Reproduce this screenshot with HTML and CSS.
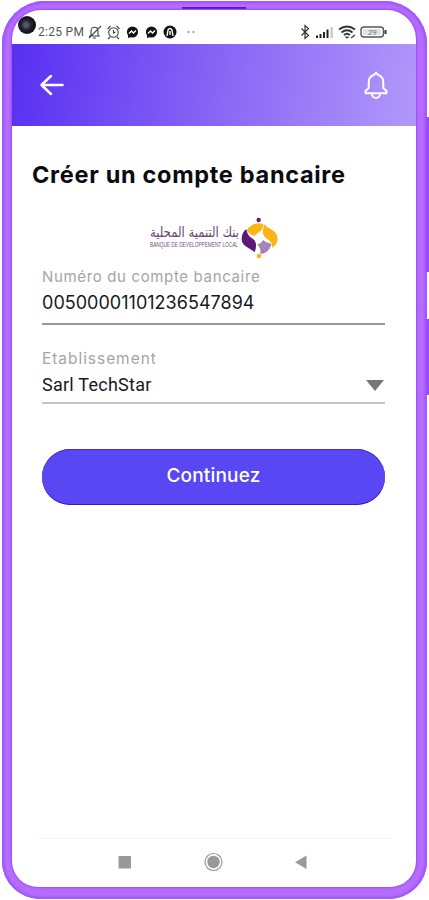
FILE: index.html
```html
<!DOCTYPE html>
<html lang="fr">
<head>
<meta charset="utf-8">
<meta name="viewport" content="width=device-width, initial-scale=1">
<title>Créer un compte bancaire</title>
<link rel="stylesheet" href="styles.css">
</head>
<body>
<div class="phone">
  <span class="speaker"></span>
  <span class="side-key volume"></span>
  <span class="side-key power"></span>
  <div class="screen">
    <span class="camera"></span>
    <div class="status">
      <span class="time">2:25 PM</span>
      <svg class="status-left" width="108" height="16" viewBox="0 0 108 16" fill="none" stroke="#444" stroke-width="1.1">
        <path d="M2 12h11M4 12V7c0-5 7-5 7 0v5M6 14h3M2 14 14 2"/>
        <circle cx="26.500" cy="8.500" r="4.800"/><path d="M26.500 6v3l2-1M20.500 5l3-3M32.500 5l-3-3M23 13l-2 2M30 13l2 2"/>
        <g stroke="none" fill="#111"><circle cx="45.500" cy="8" r="5.600"/><path d="m41 11 0 3 3-1z"/><circle cx="64.500" cy="8" r="5.600"/><path d="m60 11 0 3 3-1z"/><circle cx="83" cy="8" r="6.500"/></g>
        <path stroke="#fff" stroke-width="1.400" d="m42 9.500 2.500-2.500 2 2 2.500-2.500M61 9.500l2.500-2.500 2 2 2.500-2.500M80 12l1-6q2-3 4 0l1 6M83 7v4"/>
        <g stroke="none" fill="#aaa"><circle cx="101.500" cy="8" r="1.200"/><circle cx="106.500" cy="8" r="1.200"/></g>
      </svg>
      <svg class="status-right" width="88" height="16" viewBox="0 0 88 16" fill="none" stroke="#333" stroke-width="1.200">
        <path d="m1.500 4.500 7 7-3.500 3v-13l3.500 3-7 7"/>
        <g stroke="none" fill="#222"><rect x="16" y="11.500" width="2" height="2.500"/><rect x="19.500" y="10" width="2" height="4"/><rect x="23" y="8" width="2" height="6"/><rect x="26.500" y="5.500" width="2" height="8.500"/><rect x="30.500" y="3" width="2.500" height="11" fill="#ccc"/></g>
        <path stroke-width="1.900" d="M39 5.500q8-6 16 0M41.500 8.500q5.500-4.500 11 0M44 11q3-2.500 6 0"/><path d="m45.500 12.500 1.500 1.500 1.500-1.500M51 14l4-3"/>
        <rect x="61" y="3" width="22.500" height="10" rx="3" stroke="#555" stroke-width="1.400"/><path stroke-width="2" d="M85.500 6v4"/>
        <rect x="63" y="5" width="18" height="6" rx="1" fill="#e2e2e2" stroke="none"/>
        <text x="68" y="11" class="battery">29</text>
      </svg>
    </div>
    <header class="header">
      <svg width="26" height="22" viewBox="0 0 26 22" fill="none" stroke="#fff" stroke-width="2.500" stroke-linecap="round" stroke-linejoin="round"><path d="M23.500 11H2.500M12 2 2.500 11l9.500 9"/></svg>
      <svg width="24" height="29" viewBox="0 0 24 29" fill="none" stroke="#fff" stroke-width="2" stroke-linejoin="round"><path d="M12 1.500 14 4c4 1 5.300 4 5.300 7.500v5.500l3.200 3v2.200H1.500V20l3.200-3v-5.500C4.700 8 6 5 10 4zM8 22.500c0 6 8 6 8 0"/></svg>
    </header>
    <main class="content">
      <h1>Créer un compte bancaire</h1>
      <svg class="logo" width="130" height="42" viewBox="0 0 130 42">
        <text class="arabic" x="1" y="20" textLength="89" lengthAdjust="spacingAndGlyphs" direction="ltr">بنك التنمية المحلية</text>
        <text class="bank" x="1" y="29.500" textLength="88" lengthAdjust="spacingAndGlyphs">BANQUE DE DEVELOPPEMENT LOCAL</text>
        <g transform="translate(86 -5) scale(.333)">
          <path fill="#5b1a78" d="M31 53Q20 65 20 80q0 14 12 23l27 17q5-10 4-24-1-10-13-18-14-9-15-25z"/>
          <path fill="#fdb515" d="M35 55q8-13 22-19 14-5 28 0 0 16-11 23-8 4-14 12-14 0-25-16z"/>
          <path fill="#fdb515" d="M87 36q8 10 24 17 16 10 17 27 0 15-16 28 0-15-10-23-17-10-19-24z"/>
          <path fill="#a27daf" d="M67 98q12-3 18-14 8 9 24 12-2 15-14 23-9 7-19 6 4-15-9-27z"/>
          <path stroke="#cdb8d4" stroke-width="1.500" fill="none" d="m74 96 18 22m-12-26 20 22m-12-26 17 20"/>
          <circle cx="71" cy="24" r="6.500" fill="#5b1a78"/><circle cx="72" cy="132" r="7" fill="#fdb515"/>
        </g>
      </svg>
      <div class="field account">
        <span class="label">Numéro du compte bancaire</span>
        <span class="value digits">00500001101236547894</span>
      </div>
      <div class="field company">
        <span class="label wide">Etablissement</span>
        <span class="value name">Sarl TechStar</span>
        <svg class="caret" width="18" height="11" viewBox="0 0 18 11"><path fill="#777" d="M0 0h18l-9 11z"/></svg>
      </div>
      <button class="continue">Continuez</button>
    </main>
    <nav class="system-nav">
      <svg width="190" height="20" viewBox="0 0 190 20" fill="#999"><path d="M.5 4h12.500v12.500H.5zM188.500 3.500v13.500L177 10.200z"/><circle cx="95.500" cy="10" r="8.500" fill="none" stroke="#999" stroke-width="1.200"/><circle cx="95.500" cy="10" r="6.200"/></svg>
    </nav>
  </div>
</div>
</body>
</html>
```
FILE: styles.css
```css
* { box-sizing: border-box; }
body { margin: 0; width: 429px; height: 900px; overflow: hidden; background: #fff; font-family: Inter, "Open Sans", sans-serif; }
.phone { position: relative; width: 425px; height: 898px; margin: 1px 0 0 2px; padding: 9px 10px 12px; border-radius: 43px 43px 38px 38px; background: #b86cff; box-shadow: inset 0 0 0 1px #9c5cff, inset 0 0 3px 2px #9a50ff; }
.screen { position: relative; display: flex; flex-direction: column; width: 404px; height: 877px; border-radius: 29px 29px 26px 26px; background: #fff; box-shadow: 0 0 2px 1px #914ff5; }
.speaker { position: absolute; left: 180px; top: 6px; width: 64px; height: 2px; background: #5910d5; }
.side-key { position: absolute; left: 424px; width: 3px; background: #964bff; }
.volume { top: 116px; height: 155px; }
.power { top: 318px; height: 76px; }
.camera { position: absolute; left: 6px; top: 6px; width: 18px; height: 18px; border-radius: 50%; background: radial-gradient(circle at 45% 50%, #4d5672 0 2px, #24222a 5px, #171316 8px); }
.status { display: flex; align-items: center; height: 34px; padding: 10px 28px 0 26px; }
.time { width: 47px; color: #555; font: 12px/16px Roboto, sans-serif; letter-spacing: .3px; white-space: nowrap; }
.status-left { margin-left: 2px; }
.status-right { margin-left: auto; }
.battery { fill: #777; stroke: none; font: italic 8px Roboto, sans-serif; }
.header { display: flex; flex: none; align-items: center; justify-content: space-between; height: 82px; padding: 0 28px 0 27px; background: linear-gradient(100deg, #572ff2 0%, #8662f5 48%, #b298fb 100%); }
.content { display: flex; flex: 1; flex-direction: column; padding: 32px 31px 0 30px; }
h1 { margin: 0 0 0 -10px; color: #0b0b10; font-size: 23.5px; line-height: 34px; font-weight: 700; letter-spacing: .69px; white-space: nowrap; }
.logo { flex: none; margin: 25px 0 0 107px; }
.arabic { fill: #65446f; font: 14px "DejaVu Sans", sans-serif; }
.bank { fill: #704e7c; font: 7px "Liberation Sans", sans-serif; }
.field { position: relative; display: flex; flex: none; flex-direction: column; border-bottom: 2px solid #989898; }
.account { height: 58px; margin-top: 8px; }
.company { height: 57px; margin-top: 22px; border-color: #c5c5c5; }
.label { margin-top: -1px; color: #a3a5a6; font-size: 15px; line-height: 22px; letter-spacing: .65px; }
.wide { margin-top: 1px; font-size: 15.5px; letter-spacing: .95px; }
.value { color: #17191e; font-size: 18px; line-height: 24px; margin-top: 3px; }
.digits { letter-spacing: .02px; }
.name { margin-top: 3px; font-family: Roboto, sans-serif; letter-spacing: .25px; }
.caret { position: absolute; right: 1px; bottom: 11px; }
.continue { flex: none; height: 56px; margin-top: 45px; padding: 0 0 4px; border: 0; border-radius: 28px; background: #5847f2; box-shadow: inset 0 -1px #321abb, inset 0 1px #4531c9; color: #fff; font: 500 19px Inter, sans-serif; letter-spacing: .2px; }
.system-nav { display: flex; flex: none; justify-content: center; align-items: center; height: 49px; margin: 0 24px; padding: 0 3px 2px 0; border-top: 1px solid #f5f5f5; }
```
